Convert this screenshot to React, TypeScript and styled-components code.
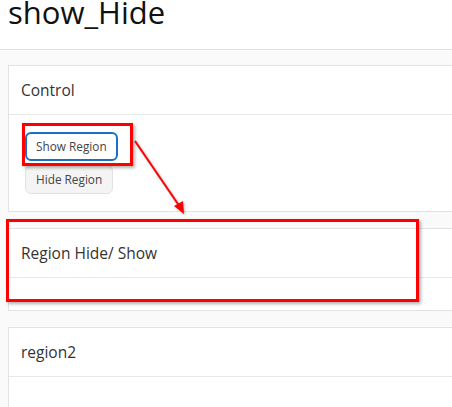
import React from "react";
import styled, { createGlobalStyle } from "styled-components";

const GlobalStyle = createGlobalStyle`
  html, body {
    margin: 0;
    padding: 0;
    background: #fafafa;
    overflow: hidden;
  }
  body {
    font-family: "Open Sans", "Noto Sans", Arial, sans-serif;
    color: #333;
  }
`;

const Page = styled.div`
  position: relative;
  width: 452px;
  height: 407px;
  overflow: hidden;
`;

const TitleBar = styled.header`
  display: flow-root;
  height: 49px;
  background: #ffffff;
  border-bottom: 1px solid #e2e2e2;
  padding-left: 8px;
`;

const Title = styled.h1`
  margin: 0;
  font-size: 31px;
  line-height: 24px;
  font-weight: 400;
  color: #111;
  white-space: nowrap;
`;

const Main = styled.main`
  display: flex;
  flex-direction: column;
  gap: 16px;
  padding: 15px 0 0 8px;
`;

const Card = styled.section`
  width: 620px;
  flex-shrink: 0;
  background: #ffffff;
  border: 1px solid #e3e3e3;
`;

const CardHeader = styled.div`
  height: 48px;
  display: flex;
  align-items: center;
  padding-left: 12px;
  border-bottom: 1px solid #e8e8e8;
  font-size: 15.5px;
  color: #333;
`;

const CardBody = styled.div<{ $empty?: boolean }>`
  display: flex;
  flex-direction: column;
  align-items: flex-start;
  gap: 4px;
  padding: ${(p) => (p.$empty ? "16px" : "17px 16px 17px")};
`;

const Button = styled.button<{ $focused?: boolean }>`
  font-family: "Open Sans", "Noto Sans", Arial, sans-serif;
  font-size: 11.8px;
  line-height: 17px;
  color: #444;
  padding: ${(p) => (p.$focused ? "4px 9px" : "5px 10px")};
  border-radius: 6px;
  cursor: pointer;
  background: ${(p) => (p.$focused ? "#ffffff" : "#f4f4f4")};
  border: ${(p) => (p.$focused ? "2px solid #1a6fc9" : "1px solid #e2e2e2")};
`;

const Highlight = styled.div<{ $x: number; $y: number; $w: number; $h: number }>`
  position: absolute;
  left: ${(p) => p.$x}px;
  top: ${(p) => p.$y}px;
  width: ${(p) => p.$w}px;
  height: ${(p) => p.$h}px;
  box-sizing: border-box;
  border: 3px solid #ff0000;
  box-shadow: 2px 2px 3px rgba(0, 0, 0, 0.3);
  pointer-events: none;
`;

const ArrowSvg = styled.svg`
  position: absolute;
  left: 0;
  top: 0;
  pointer-events: none;
  filter: drop-shadow(1px 1px 1px rgba(0, 0, 0, 0.3));
`;

export default function App() {
  return (
    <>
      <GlobalStyle />
      <Page>
        <TitleBar>
          <Title>show_Hide</Title>
        </TitleBar>
        <Main>
          <Card>
            <CardHeader>Control</CardHeader>
            <CardBody>
              <Button $focused>Show Region</Button>
              <Button>Hide Region</Button>
            </CardBody>
          </Card>
          <Card>
            <CardHeader>Region Hide/ Show</CardHeader>
            <CardBody $empty />
          </Card>
          <Card>
            <CardHeader>region2</CardHeader>
            <CardBody $empty />
          </Card>
        </Main>
        <Highlight $x={22} $y={123} $w={111} $h={43} />
        <Highlight $x={6} $y={219} $w={413} $h={83} />
        <ArrowSvg width="452" height="407" viewBox="0 0 452 407">
          <line x1="135" y1="141" x2="180" y2="207" stroke="#ff0000" strokeWidth="2" />
          <polygon points="184,214 174,206 183,201" fill="#ff0000" />
        </ArrowSvg>
      </Page>
    </>
  );
}
